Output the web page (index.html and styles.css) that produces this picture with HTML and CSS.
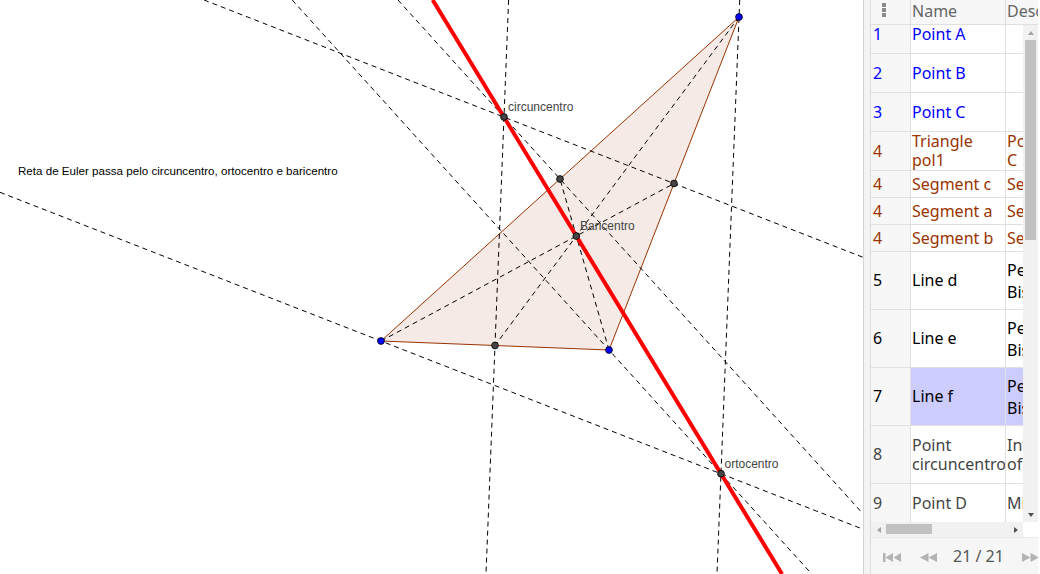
FILE: index.html
```html
<!DOCTYPE html>
<html>
<head>
<meta charset="utf-8">
<link rel="stylesheet" href="styles.css">
</head>
<body>
<div class="app">
  <div class="canvas">
    <svg class="board" width="863" height="574" viewBox="0 0 863 574">
      <polygon class="tri" points="381,341 609,350 739,17"/>
      <g class="dash">
        <line x1="204" y1="0" x2="863" y2="257.3"/>
        <line x1="398" y1="0" x2="863" y2="513.8"/>
        <line x1="508.6" y1="0" x2="486" y2="574"/>
        <line x1="0" y1="192.3" x2="863" y2="529.2"/>
        <line x1="292.2" y1="0" x2="811.7" y2="574"/>
        <line x1="739.7" y1="0" x2="717" y2="574"/>
        <line x1="381" y1="341" x2="674" y2="183.5"/>
        <line x1="609" y1="350" x2="560" y2="179"/>
        <line x1="739" y1="17" x2="495" y2="345.5"/>
      </g>
      <line class="euler" x1="432.7" y1="0" x2="782" y2="574"/>
      <g class="pt-dep">
        <circle cx="504" cy="117" r="3.4"/>
        <circle cx="721" cy="473.7" r="3.4"/>
        <circle cx="576.3" cy="236" r="3.4"/>
        <circle cx="495" cy="345.5" r="3.4"/>
        <circle cx="560" cy="179" r="3.4"/>
        <circle cx="674" cy="183.5" r="3.4"/>
      </g>
      <g class="pt-free">
        <circle cx="381" cy="341" r="3.4"/>
        <circle cx="609" cy="350" r="3.4"/>
        <circle cx="739" cy="17" r="3.4"/>
      </g>
      <g class="lbl">
        <text x="508" y="111">circuncentro</text>
        <text x="580" y="230">Baricentro</text>
        <text x="724.5" y="468">ortocentro</text>
      </g>
      <text class="note" x="18" y="175">Reta de Euler passa pelo circuncentro, ortocentro e baricentro</text>
    </svg>
  </div>
  <div class="splitter"></div>
  <div class="panel">
    <div class="hdr">
      <div class="c num"><span class="kebab"><i></i><i></i><i></i></span></div>
      <div class="c name">Name</div>
      <div class="c desc">Description</div>
    </div>
    <div class="body">
      <div class="rows">
        <div class="rows-inner">
          <div class="row h39 blue"><div class="c num">1</div><div class="c name">Point A</div><div class="c desc"></div></div>
          <div class="row h39 blue"><div class="c num">2</div><div class="c name">Point B</div><div class="c desc"></div></div>
          <div class="row h39 blue"><div class="c num">3</div><div class="c name">Point C</div><div class="c desc"></div></div>
          <div class="row h39 brown"><div class="c num">4</div><div class="c name">Triangle pol1</div><div class="c desc">Polygon A, B,<br>C</div></div>
          <div class="row h27 brown"><div class="c num">4</div><div class="c name">Segment c</div><div class="c desc">Segment A, B</div></div>
          <div class="row h27 brown"><div class="c num">4</div><div class="c name">Segment a</div><div class="c desc">Segment B, C</div></div>
          <div class="row h27 brown"><div class="c num">4</div><div class="c name">Segment b</div><div class="c desc">Segment C, A</div></div>
          <div class="row h58 black"><div class="c num">5</div><div class="c name">Line d</div><div class="c desc wide">Perpendicular<br>Bisector of c</div></div>
          <div class="row h58 black"><div class="c num">6</div><div class="c name">Line e</div><div class="c desc wide">Perpendicular<br>Bisector of a</div></div>
          <div class="row h58 black sel"><div class="c num">7</div><div class="c name">Line f</div><div class="c desc wide">Perpendicular<br>Bisector of b</div></div>
          <div class="row h58 gray"><div class="c num">8</div><div class="c name">Point circuncentro</div><div class="c desc">Intersection<br>of d and e</div></div>
          <div class="row h39 gray"><div class="c num">9</div><div class="c name">Point D</div><div class="c desc">Midpoint of A, B</div></div>
        </div>
      </div>
      <div class="vscroll">
        <div class="sbtn"><span class="arr up"></span></div>
        <div class="vtrack"><div class="vthumb"></div></div>
        <div class="sbtn"><span class="arr down"></span></div>
      </div>
    </div>
    <div class="hbar">
      <div class="htrack">
        <div class="sbtn"><span class="arr left"></span></div>
        <div class="hmid"><div class="hthumb"></div></div>
        <div class="sbtn"><span class="arr right"></span></div>
      </div>
      <div class="corner"></div>
    </div>
    <div class="pager">
      <svg class="pico first" width="18" height="9" viewBox="0 0 18 9"><rect x="0" y="0" width="2.5" height="9"/><polygon points="10,0 2.5,4.5 10,9"/><polygon points="18,0 10.5,4.5 18,9"/></svg>
      <svg class="pico prev" width="17" height="9" viewBox="0 0 17 9"><polygon points="8.5,0 0,4.5 8.5,9"/><polygon points="17,0 8.5,4.5 17,9"/></svg>
      <span class="count">21 / 21</span>
      <svg class="pico next" width="17" height="9" viewBox="0 0 17 9"><polygon points="0,0 8.5,4.5 0,9"/><polygon points="8.5,0 17,4.5 8.5,9"/></svg>
    </div>
  </div>
</div>
</body>
</html>
```

FILE: styles.css
```css
html, body {
  margin: 0;
  padding: 0;
  background: #fff;
}

.app {
  display: flex;
  width: 1040px;
  height: 574px;
  overflow: hidden;
}

/* ---------- graphics view ---------- */
.canvas {
  flex: none;
  width: 863px;
  height: 574px;
  background: #fff;
}

.board {
  display: block;
}

.tri {
  fill: #993300;
  fill-opacity: 0.1;
  stroke: #993300;
  stroke-width: 1;
}

.dash line {
  stroke: #000;
  stroke-width: 1;
  stroke-dasharray: 5 4;
}

.euler {
  stroke: #ff0000;
  stroke-width: 4;
}

.pt-dep circle {
  fill: #444;
  stroke: #000;
  stroke-width: 0.8;
}

.pt-free circle {
  fill: #0000ff;
  stroke: #000;
  stroke-width: 0.8;
}

.lbl text {
  font-family: "Liberation Sans", Arial, sans-serif;
  font-size: 12px;
  fill: #444;
}

.note {
  font-family: "Liberation Sans", Arial, sans-serif;
  font-size: 11.6px;
  fill: #000;
}

/* ---------- splitter ---------- */
.splitter {
  flex: none;
  width: 7px;
  box-sizing: border-box;
  background: #f3f3f3;
  border-left: 1px solid #d4d4d4;
}

/* ---------- algebra panel ---------- */
.panel {
  flex: none;
  width: 170px;
  box-sizing: border-box;
  border-left: 1px solid #dcdcdc;
  padding-right: 2px;
  display: flex;
  flex-direction: column;
  font-family: "Noto Sans", sans-serif;
  font-size: 16px;
  background: #fff;
}

.hdr {
  flex: none;
  height: 25px;
  box-sizing: border-box;
  border-bottom: 1px solid #e0e0e0;
  display: grid;
  grid-template-columns: 40px 95px 1fr;
  background: #f7f7f7;
  color: #666;
  overflow: hidden;
}

.hdr .c {
  line-height: 22px;
}

.c {
  box-sizing: border-box;
  overflow: hidden;
  white-space: nowrap;
}

.c.num {
  border-right: 1px solid #e0e0e0;
  padding-left: 2px;
}

.c.name {
  border-right: 1px solid #e0e0e0;
  padding-left: 1px;
}

.c.desc {
  padding-left: 1px;
}

.kebab {
  display: flex;
  flex-direction: column;
  gap: 1px;
  margin: 3px 0 0 9px;
  width: 4px;
}

.kebab i {
  display: block;
  width: 4px;
  height: 4px;
  background: #8a8a8a;
}

.body {
  flex: none;
  height: 497px;
  display: flex;
}

.rows {
  flex: none;
  width: 152px;
  overflow: hidden;
}

.rows-inner {
  margin-top: -10px;
}

.row {
  display: grid;
  grid-template-columns: 40px 95px 1fr;
  box-sizing: border-box;
  border-bottom: 1px solid #e0e0e0;
  line-height: 19px;
}

.row .c {
  display: flex;
  align-items: center;
}

.row .c.num {
  background: #f7f7f7;
}

.row .c.name {
  white-space: normal;
}

.row .c.desc.wide {
  line-height: 22px;
}

.h39 { height: 39px; }
.h27 { height: 27px; }
.h58 { height: 58px; }

.blue { color: #0000ff; }
.brown { color: #993300; }
.black { color: #000; }
.gray { color: #444; }

.sel .c.name,
.sel .c.desc {
  background: #ccccff;
}

/* ---------- scrollbars ---------- */
.vscroll {
  flex: none;
  width: 15px;
  display: flex;
  flex-direction: column;
  background: #f1f1f1;
}

.sbtn {
  flex: none;
  width: 15px;
  height: 15px;
  display: flex;
  align-items: center;
  justify-content: center;
}

.vtrack {
  flex: 1;
  padding: 0 2px;
}

.vthumb {
  height: 200px;
  background: #c1c1c1;
}

.arr {
  display: block;
  width: 0;
  height: 0;
  border-style: solid;
}

.arr.up {
  border-width: 0 3.5px 4px 3.5px;
  border-color: transparent transparent #a3a3a3 transparent;
}

.arr.down {
  border-width: 4px 3.5px 0 3.5px;
  border-color: #505050 transparent transparent transparent;
}

.arr.left {
  border-width: 3.5px 4px 3.5px 0;
  border-color: transparent #a3a3a3 transparent transparent;
}

.arr.right {
  border-width: 3.5px 0 3.5px 4px;
  border-color: transparent transparent transparent #505050;
}

.hbar {
  flex: none;
  height: 15px;
  display: flex;
}

.htrack {
  flex: none;
  width: 152px;
  display: flex;
  background: #f1f1f1;
}

.hmid {
  flex: 1;
  padding-top: 2px;
}

.hthumb {
  width: 46px;
  height: 10px;
  background: #c1c1c1;
}

.corner {
  flex: none;
  width: 15px;
  background: #fff;
}

/* ---------- pager ---------- */
.pager {
  flex: none;
  height: 37px;
  box-sizing: border-box;
  display: flex;
  align-items: center;
  padding-left: 12px;
  background: #f6f6f6;
  border-top: 1px solid #ebebeb;
  overflow: hidden;
}

.pico {
  flex: none;
  display: block;
  fill: #b3b3b3;
  margin-top: 3px;
}

.pico.prev {
  margin-left: 19px;
}

.count {
  margin-left: 16px;
  color: #555;
  white-space: nowrap;
}

.pico.next {
  margin-left: 18px;
}
```
